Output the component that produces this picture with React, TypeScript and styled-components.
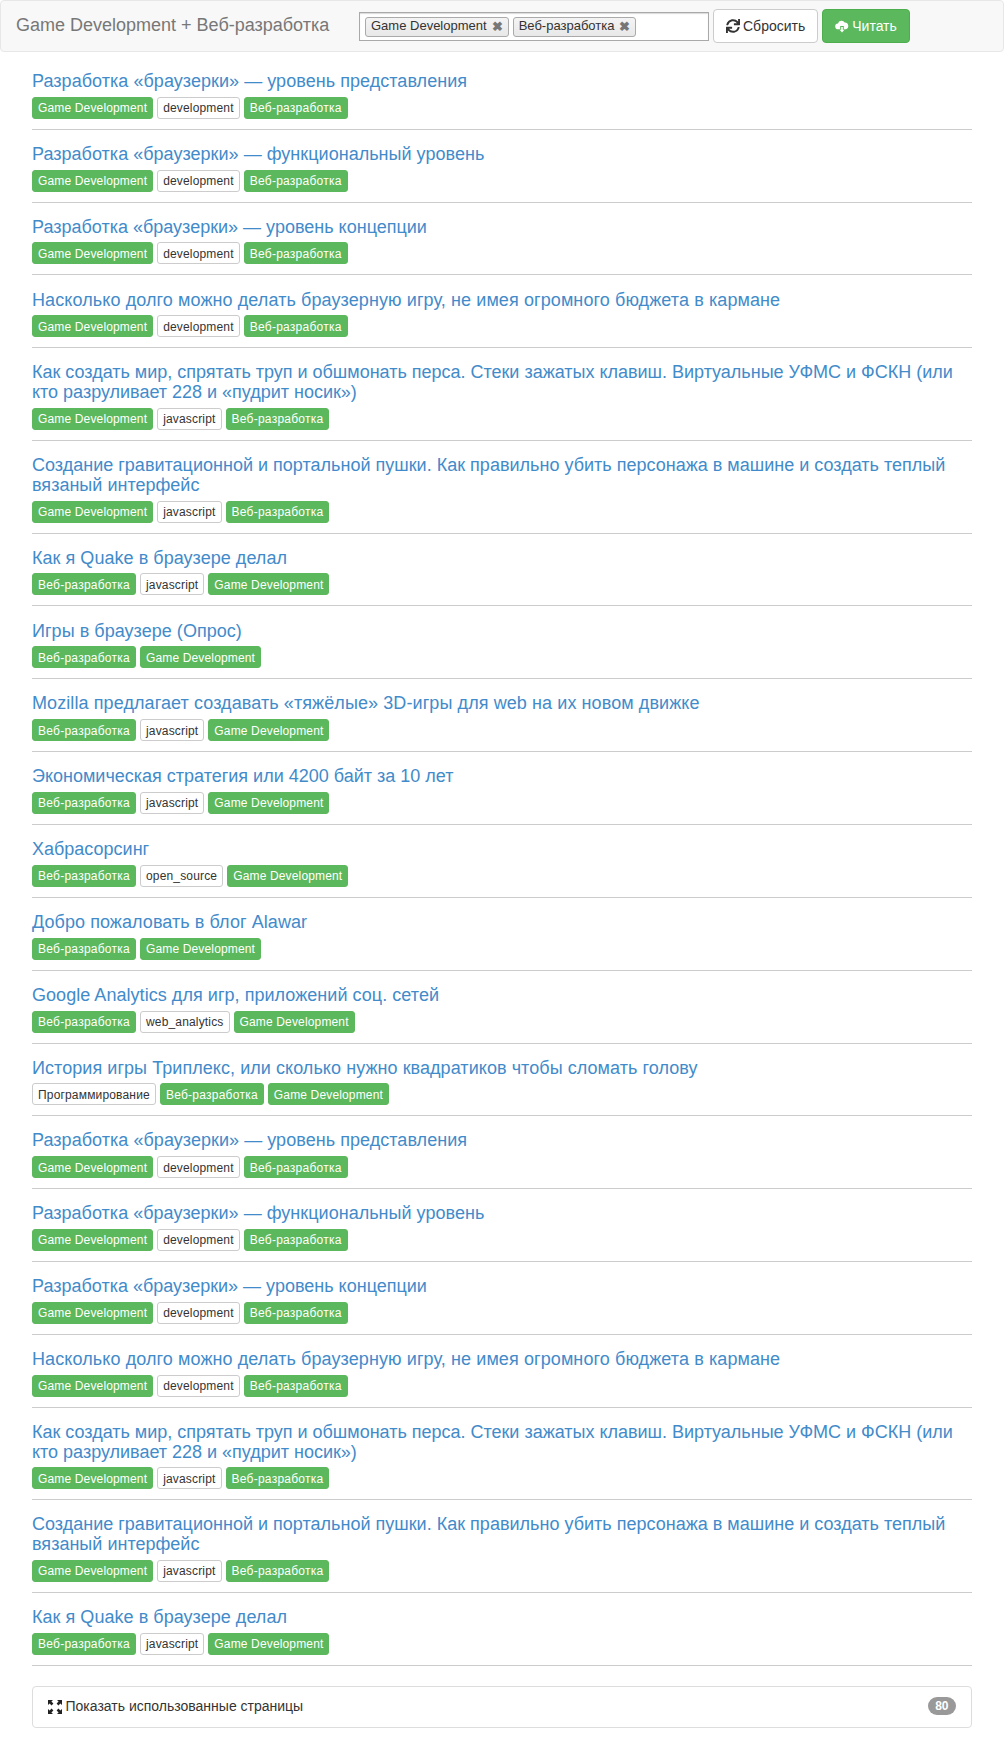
import React from "react";
import styled, { createGlobalStyle } from "styled-components";
import { FaSync } from "react-icons/fa";

const Global = createGlobalStyle`
  html, body { margin: 0; padding: 0; background: #fff; }
  body { font-family: "Liberation Sans", Arial, sans-serif; font-size: 14px; line-height: 1.42857; color: #333; }
  * { box-sizing: border-box; }
`;

const Navbar = styled.nav`
  display: flex;
  align-items: flex-start;
  height: 52px;
  background: #f8f8f8;
  border: 1px solid #e7e7e7;
  border-radius: 4px;
`;
const Brand = styled.div`
  font-size: 18px;
  line-height: 20px;
  color: #777;
  padding: 14px 0 0 15px;
  width: 358px;
`;
const TagsInput = styled.div`
  display: flex;
  align-items: center;
  gap: 4px;
  width: 350px;
  height: 29px;
  margin-top: 11px;
  padding: 0 5px;
  background: #fff;
  border: 1px solid #a9a9a9;
  box-shadow: inset 0 1px 1px rgba(0, 0, 0, 0.15);
`;
const Chip = styled.span`
  display: inline-flex;
  align-items: center;
  height: 20px;
  padding: 0 5px;
  gap: 5px;
  font-size: 13px;
  color: #333;
  background: linear-gradient(#f4f4f4, #e8e8e8);
  border: 1px solid #aaa;
  border-radius: 3px;
`;
const ChipClose = styled.span`
  font-size: 13px;
  font-weight: bold;
  color: #777;
  line-height: 1;
`;
const Btn = styled.button<{ $green?: boolean }>`
  display: inline-flex;
  align-items: center;
  gap: 3px;
  height: 34px;
  margin: 8px 0 0 4px;
  padding: 0 12px;
  font-family: inherit;
  font-size: 14px;
  border-radius: 4px;
  border: 1px solid ${(p) => (p.$green ? "#4cae4c" : "#ccc")};
  background: ${(p) => (p.$green ? "#5cb85c" : "#fff")};
  color: ${(p) => (p.$green ? "#fff" : "#333")};
`;
const List = styled.main`
  padding: 20px 32px 0;
`;
const Item = styled.article`
  padding-bottom: 10px;
  margin-bottom: 15.05px;
  border-bottom: 1px solid #ccc;
`;
const Title = styled.a<{ $spacing?: number }>`
  display: block;
  font-size: 18px;
  line-height: 19.8px;
  letter-spacing: ${(p) => p.$spacing ?? 0}px;
  color: #428bca;
  margin-bottom: 5px;
`;
const Labels = styled.div`
  display: flex;
  gap: 4px;
`;
const Label = styled.span<{ $green?: boolean; $spacing: number }>`
  display: inline-flex;
  align-items: center;
  height: 22px;
  padding: 2px 5px 0;
  font-size: 12px;
  letter-spacing: ${(p) => p.$spacing}px;
  border-radius: 3px;
  border: 1px solid ${(p) => (p.$green ? "#5cb85c" : "#ccc")};
  background: ${(p) => (p.$green ? "#5cb85c" : "#fff")};
  color: ${(p) => (p.$green ? "#fff" : "#333")};
`;
const Panel = styled.section`
  display: flex;
  align-items: center;
  justify-content: space-between;
  height: 42px;
  margin: 20px 0 0;
  padding: 0 15px;
  border: 1px solid #ddd;
  border-radius: 4px;
`;
const PanelLabel = styled.span`
  display: inline-flex;
  align-items: center;
  gap: 3.5px;
`;
const Badge = styled.span`
  background: #999;
  color: #fff;
  font-size: 12px;
  font-weight: bold;
  line-height: 1;
  padding: 3px 7.5px;
  margin-top: -2px;
  border-radius: 10px;
`;

const CloudIcon = () => (
  <svg width="14" height="14" viewBox="0 0 14 14" fill="#fff">
    <path d="M3.2 10.2A2.9 2.9 0 0 1 3 4.4 3.6 3.6 0 0 1 9.7 3.6 3.4 3.4 0 0 1 11 10.2H8.8V7H5.2v3.2Z" />
    <path d="M6.2 8h1.6v2.8h1.6L7 13.6 4.6 10.8h1.6Z" />
  </svg>
);
const ExpandIcon = () => (
  <svg width="14" height="14" viewBox="0 0 14 14" fill="#222">
    <path d="M0 0h5L3.4 1.6 5.4 3.6 3.6 5.4 1.6 3.4 0 5Z" />
    <path d="M14 0v5L12.4 3.4 10.4 5.4 8.6 3.6 10.6 1.6 9 0Z" />
    <path d="M0 14V9L1.6 10.6 3.6 8.6 5.4 10.4 3.4 12.4 5 14Z" />
    <path d="M14 14H9L10.6 12.4 8.6 10.4 10.4 8.6 12.4 10.6 14 9Z" />
  </svg>
);

const G = "Game Development";
const W = "Веб-разработка";
const labelSpacing = (text: string) => (text === G ? 0.15 : text === W ? 0.25 : 0.17);
type Row = { title: string; labels: [string, boolean][]; spacing?: number };
const gd = (mid: string): [string, boolean][] => [[G, true], [mid, false], [W, true]];
const wd = (mid: string): [string, boolean][] => [[W, true], [mid, false], [G, true]];

const first: Row[] = [
  { title: "Разработка «браузерки» — уровень представления", labels: gd("development"), spacing: 0.047 },
  { title: "Разработка «браузерки» — функциональный уровень", labels: gd("development"), spacing: 0.024 },
  { title: "Разработка «браузерки» — уровень концепции", labels: gd("development") },
  { title: "Насколько долго можно делать браузерную игру, не имея огромного бюджета в кармане", labels: gd("development"), spacing: 0.096 },
  { title: "Как создать мир, спрятать труп и обшмонать перса. Стеки зажатых клавиш. Виртуальные УФМС и ФСКН (или кто разруливает 228 и «пудрит носик»)", labels: gd("javascript"), spacing: -0.01 },
  { title: "Создание гравитационной и портальной пушки. Как правильно убить персонажа в машине и создать теплый вязаный интерфейс", labels: gd("javascript"), spacing: 0.01 },
  { title: "Как я Quake в браузере делал", labels: wd("javascript"), spacing: 0.04 },
];
const rows: Row[] = [
  ...first,
  { title: "Игры в браузере (Опрос)", labels: [[W, true], [G, true]], spacing: 0.04 },
  { title: "Mozilla предлагает создавать «тяжёлые» 3D-игры для web на их новом движке", labels: wd("javascript"), spacing: 0.09 },
  { title: "Экономическая стратегия или 4200 байт за 10 лет", labels: wd("javascript") },
  { title: "Хабрасорсинг", labels: wd("open_source") },
  { title: "Добро пожаловать в блог Alawar", labels: [[W, true], [G, true]], spacing: 0.07 },
  { title: "Google Analytics для игр, приложений соц. сетей", labels: wd("web_analytics"), spacing: 0.045 },
  { title: "История игры Триплекс, или сколько нужно квадратиков чтобы сломать голову", labels: [["Программирование", false], [W, true], [G, true]], spacing: 0.06 },
  ...first,
];

export default function App() {
  return (
    <>
      <Global />
      <Navbar>
        <Brand>Game Development + Веб-разработка</Brand>
        <TagsInput>
          <Chip>Game Development <ChipClose>✖</ChipClose></Chip>
          <Chip>Веб-разработка <ChipClose>✖</ChipClose></Chip>
        </TagsInput>
        <Btn><FaSync size={14} />Сбросить</Btn>
        <Btn $green><CloudIcon />Читать</Btn>
      </Navbar>
      <List>
        {rows.map((r, i) => (
          <Item key={i}>
            <Title $spacing={r.spacing}>{r.title}</Title>
            <Labels>
              {r.labels.map(([t, g], j) => (
                <Label key={j} $green={g} $spacing={labelSpacing(t)}>{t}</Label>
              ))}
            </Labels>
          </Item>
        ))}
        <Panel>
          <PanelLabel><ExpandIcon />Показать использованные страницы</PanelLabel>
          <Badge>80</Badge>
        </Panel>
      </List>
    </>
  );
}
